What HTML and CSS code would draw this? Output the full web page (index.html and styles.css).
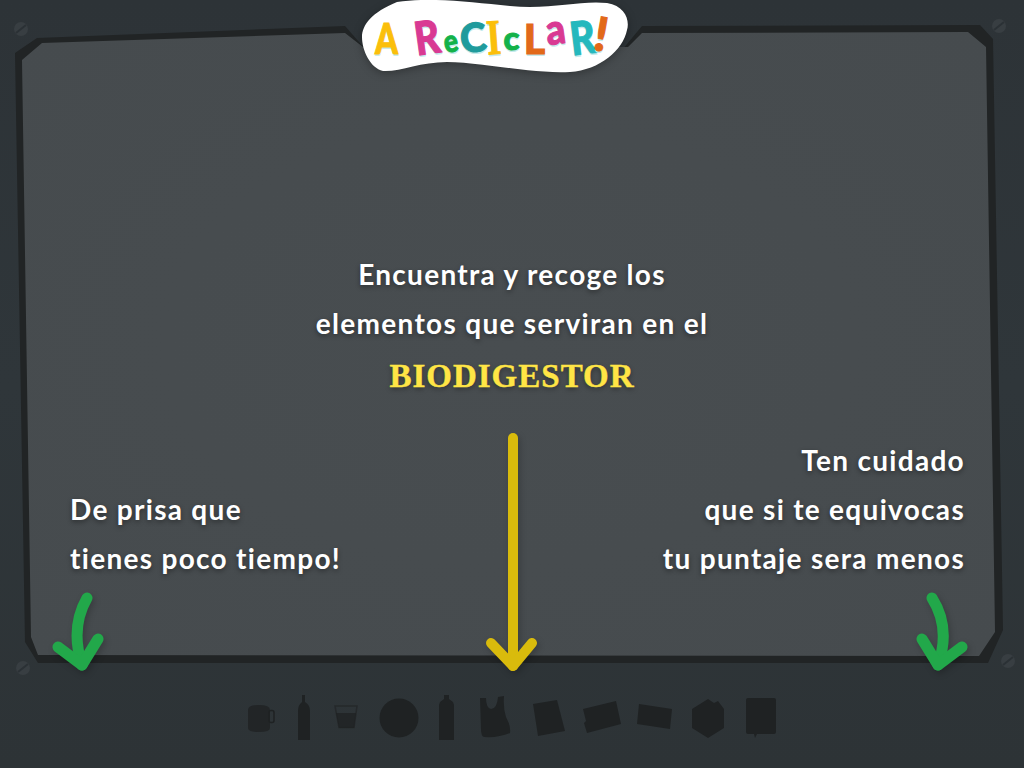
FILE: index.html

```html
<!DOCTYPE html>
<html lang="es">
<head>
    <meta charset="UTF-8">
    <title>A Reciclar!</title>
    <link rel="stylesheet" href="styles.css">
</head>
<body>
    <div class="stage">
        <!-- Tablero de fondo -->
        <svg class="board" viewBox="0 0 1024 768" aria-hidden="true">
            <defs>
                <radialGradient id="tablero" cx="50%" cy="50%" r="70%">
                    <stop offset="0" stop-color="#484d50"/>
                    <stop offset="1" stop-color="#464b4e"/>
                </radialGradient>
            </defs>
            <polygon class="board-frame" points="15,53 37,38 345,26 366,50 622,50 642,26 980,25 993,39 1003,630 988,663 38,663 25,642"/>
            <polygon fill="url(#tablero)" points="22,60 42,43 345,33 363,47 628,47 642,33 968,32 986,47 995,632 979,656 38,655 31,637"/>
            <g class="screw">
                <circle cx="21" cy="29" r="7"/><line x1="16" y1="33" x2="26" y2="25"/>
            </g>
            <g class="screw">
                <circle cx="999" cy="26" r="7"/><line x1="994" y1="30" x2="1004" y2="22"/>
            </g>
            <g class="screw">
                <circle cx="1008" cy="661" r="7"/><line x1="1003" y1="665" x2="1013" y2="657"/>
            </g>
            <g class="screw">
                <circle cx="23" cy="668" r="7"/><line x1="18" y1="672" x2="28" y2="664"/>
            </g>
        </svg>

        <!-- Logo -->
        <div class="logo">
            <svg class="logo-blob" viewBox="355 0 280 76" aria-hidden="true">
                <path d="M397 2 C430 -3 470 2 510 6 C550 10 580 0 607 3 C625 6 630 20 627 30 C623 50 600 70 570 72 C530 74 480 62 447 62 C420 62 400 72 383 71 C370 68 362 50 362 37 C362 25 372 12 397 2 Z"/>
            </svg>
            <div class="logo-text">
                <span class="letter l-a">A</span>
                <span class="letter l-r">R</span>
                <span class="letter l-e">e</span>
                <span class="letter l-c">C</span>
                <span class="letter l-i">I</span>
                <span class="letter l-c2">c</span>
                <span class="letter l-l">L</span>
                <span class="letter l-a2">a</span>
                <span class="letter l-r2">R</span>
                <span class="letter l-ex">!</span>
            </div>
        </div>

        <div class="message">
            <p>Encuentra y recoge los</p>
            <p>elementos que serviran en el</p>
            <p class="highlight">BIODIGESTOR</p>
        </div>

        <div class="notes">
            <div class="note">
                <p>De prisa que</p>
                <p>tienes poco tiempo!</p>
            </div>
            <div class="note note-right">
                <p>Ten cuidado</p>
                <p>que si te equivocas</p>
                <p>tu puntaje sera menos</p>
            </div>
        </div>

        <!-- Siluetas de los elementos por recoger -->
        <div class="tray">
            <svg class="tray-items" viewBox="246 692 534 48" aria-hidden="true">
                <!-- taza -->
                <path d="M248 709 Q248 704 259 704 Q270 704 270 709 L270 727 Q270 731 259 731 Q248 731 248 727 Z" opacity=".8"/>
                <rect class="tray-line" x="269" y="709.500" width="5" height="12" rx="2"/>
                <!-- botella -->
                <path d="M302 694 L305 694 L305 701 Q310 704 310 710 L310 739 L298 739 L298 710 Q298 704 302 701 Z"/>
                <!-- vaso -->
                <path class="tray-line" d="M335 705 L357 705 L354 726.500 L339 726.500 Z" opacity=".6"/>
                <path d="M336 712 L356 712 L354 727 L339 727 Z" opacity=".75"/>
                <!-- plato -->
                <circle cx="399" cy="717" r="19.500"/>
                <!-- botella plastica -->
                <path d="M444 694 L449 694 L449 698 L453 701 L454 704 L454 739 L439 739 L439 704 L440 701 L444 698 Z"/>
                <!-- bolsa -->
                <path d="M480 697 L486 697 Q486 707 491 708 Q497 708 498 696 L504 695 Q503 707 506 716 Q511 725 510 732 Q498 737 484 736 Q481 735 481 728 Z"/>
                <!-- papeles -->
                <polygon points="533,703 557,699 565,730 538,735"/>
                <polygon points="583,708 616,700 621,723 587,732 584,722 586,720"/>
                <polygon points="639,703 672,708 670,728 637,723"/>
                <!-- caja -->
                <polygon points="708,698 714,702 718,700 724,708 724,727 708,737 692,727 692,708"/>
                <!-- libreta -->
                <path d="M748 697 L774 697 Q776 697 776 699 L776 731 Q776 733 774 733 L757 733 L755 737 L754 733 L748 733 Q746 733 746 731 L746 699 Q746 697 748 697 Z"/>
            </svg>
        </div>

        <!-- Flechas sobre el tablero -->
        <svg class="arrows" viewBox="0 0 1024 768" aria-hidden="true">
            <g class="arrow arrow-green">
                <path d="M87 598 Q70 628 82 665"/>
                <path d="M58 647 L82 665 L98 639"/>
            </g>
            <g class="arrow arrow-green">
                <path d="M932 598 Q951 628 938 665"/>
                <path d="M922 639 L938 665 L962 647"/>
            </g>
            <g class="arrow arrow-yellow">
                <path d="M513 438 L513 666"/>
                <path d="M491 643 L513 666 L532 643"/>
            </g>
        </svg>
    </div>
</body>
</html>
```

FILE: styles.css

```css
/* Estilo general */
body {
    margin: 0;
    background-color: #2e3438;
    font-family: "Lato", "Noto Sans", sans-serif;
    color: #fff;
}

p {
    margin: 0;
}

/* Escena del juego */
.stage {
    position: relative;
    display: flex;
    flex-direction: column;
    width: 1024px;
    height: 768px;
    padding-top: 250px;
    box-sizing: border-box;
    overflow: hidden;
    background: linear-gradient(#2d3337, #2f363a 50%, #2d3336);
}

.board,
.arrows {
    position: absolute;
    top: 0;
    left: 0;
    width: 1024px;
    height: 768px;
}

.board-frame {
    fill: #212425;
}

.screw circle {
    fill: #383e42;
}

.screw line {
    stroke: #2b3135;
    stroke-width: 2;
}

/* Logo */
.logo {
    position: absolute;
    top: 0;
    left: 355px;
    width: 280px;
    height: 76px;
}

.logo-blob {
    display: block;
    width: 280px;
    height: 76px;
    fill: #fff;
    filter: drop-shadow(0 2px 4px rgba(0, 0, 0, 0.3));
}

.logo-text {
    position: absolute;
    top: 0;
    left: 20px;
    display: flex;
    align-items: center;
    height: 72px;
    font-family: "Lato", sans-serif;
    font-weight: 900;
    line-height: 1;
}

.letter {
    display: flex;
    justify-content: center;
    -webkit-text-stroke: 1px currentColor;
    text-shadow: 0 2px 0 #c6ebec;
}

.l-a { width: 23px; margin-right: 16px; color: #fbbf0b; font-size: 42px; transform: translateY(2px) scaleX(.78); }
.l-r { width: 26px; margin-right: 3px; color: #d93a93; font-size: 46px; transform: translateY(1px) rotate(-8deg) scaleX(.85); }
.l-e { width: 15px; margin-right: 3px; color: #13b24a; font-size: 31px; transform: translateY(4px) rotate(-10deg) scaleX(.85); }
.l-c { width: 24px; margin-right: 2px; color: #1f9b9c; font-size: 40px; transform: translateY(1px) rotate(-6deg); }
.l-i { width: 13px; margin-right: 3px; color: #fbbf0b; font-family: "Liberation Serif", serif; font-weight: 700; font-size: 50px; transform: translateY(1px) rotate(-4deg) scaleX(.72); }
.l-c2 { width: 17px; margin-right: 5px; color: #13b24a; font-size: 33px; transform: translateY(1px); }
.l-l { width: 19px; margin-right: 1px; color: #e2691a; font-size: 41px; transform: translateY(2px); }
.l-a2 { width: 20px; margin-right: 5px; color: #d93a93; font-size: 42px; transform: translateY(-8px) rotate(-8deg) scaleX(.9); }
.l-r2 { width: 25px; color: #25b8bd; font-size: 46px; transform: translateY(1px) rotate(-7deg) scaleX(.85); }
.l-ex { width: 13px; color: #e2691a; font-size: 47px; transform: translateY(-3px) rotate(10deg); }

/* Textos */
.message,
.note {
    position: relative;
    font-weight: 700;
    font-size: 28px;
    line-height: 49px;
    letter-spacing: 1.300px;
    text-shadow: 0 2px 5px rgba(0, 0, 0, 0.4);
}

.message {
    text-align: center;
}

.highlight {
    margin-top: 4px;
    font-family: "Liberation Serif", serif;
    font-size: 33px;
    letter-spacing: 1px;
    -webkit-text-stroke: 0.4px currentColor;
    color: #ffe545;
}

.notes {
    position: relative;
    display: flex;
    justify-content: space-between;
    align-items: flex-end;
    padding: 0 59px 0 70px;
    margin-top: 35px;
}

.note-right {
    text-align: right;
}

/* Fila de elementos */
.tray {
    position: relative;
    display: flex;
    justify-content: center;
    margin-top: 110px;
    padding-left: 2px;
}

.tray-items {
    display: block;
    width: 534px;
    height: 48px;
    fill: #1f2223;
}

.tray-line {
    fill: none;
    stroke: #1f2223;
    stroke-width: 1.500;
}

/* Flechas */
.arrow {
    fill: none;
    stroke-linecap: round;
    stroke-linejoin: round;
    stroke-width: 10px;
    filter: drop-shadow(2px 3px 3px rgba(0, 0, 0, 0.2));
}

.arrow-green {
    stroke: #22a84a;
    stroke-width: 11px;
}

.arrow-yellow {
    stroke: #d9bb0c;
}
```
